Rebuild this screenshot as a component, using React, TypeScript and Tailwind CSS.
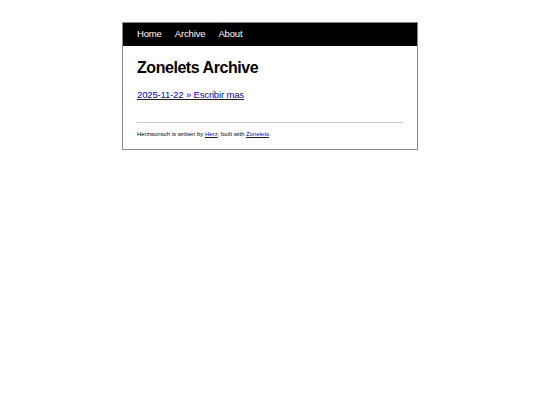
export default function App() {
  return (
    <div className="min-h-[405px] bg-white pt-[22px] font-['Liberation_Sans',Arial,sans-serif]">
      <div className="w-[296px] border border-[#8a8a8a] ml-[122px]">
        <nav className="flex h-[23px] items-center gap-[13px] bg-black px-[14px] text-[9.5px] tracking-[-0.15px] text-white">
          <a>Home</a>
          <a>Archive</a>
          <a>About</a>
        </nav>
        <main className="px-[14px] pt-[13px] pb-[11px]">
          <h1 className="text-[16px] font-bold leading-[18px] tracking-[-0.45px] text-black">Zonelets Archive</h1>
          <div className="mt-[12px] text-[9.5px] leading-[11px] tracking-[-0.15px]">
            <a href="#" className="text-[#0000ee] underline">2025-11-22 » Escribir mas</a>
          </div>
          <hr className="mt-[22px] border-t border-[#c8c8c8]" />
          <footer className="mt-[7px] text-[6px] leading-[8px] text-black">
            Herzwunsch is written by <a href="#" className="text-[#0000ee] underline">Herz</a>, built with{' '}
            <a href="#" className="text-[#0000ee] underline">Zonelets</a>.
          </footer>
        </main>
      </div>
    </div>
  );
}
